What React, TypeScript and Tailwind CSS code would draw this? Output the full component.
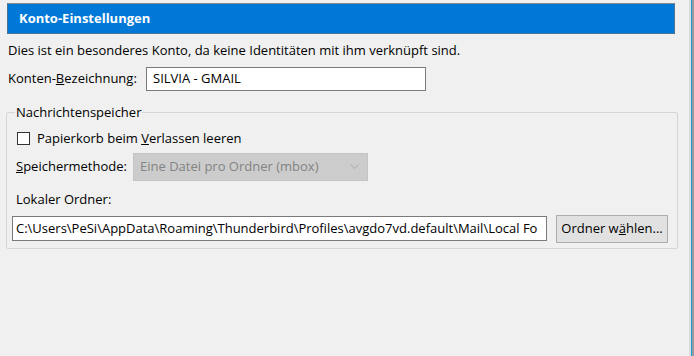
import React from "react";

const App = () => {
  return (
    <div
      className="flex w-[694px] h-[356px] bg-[#f0f0f0] text-[13px] text-black overflow-hidden"
      style={{ fontFamily: '"Open Sans", "Noto Sans", sans-serif' }}
    >
      <div className="flex flex-col w-[689px] pt-[3px] pl-[7px]">
        <div className="w-[668px] h-[31px] bg-[#0078d7] border border-[#4f7396] border-t-[#8a8a8a] flex items-center pl-[11px]">
          <span className="text-white font-bold text-[13px]">Konto-Einstellungen</span>
        </div>
        <div className="pl-[1px] mt-[8px] leading-[16px]">
          Dies ist ein besonderes Konto, da keine Identitäten mit ihm verknüpft sind.
        </div>
        <div className="flex items-center mt-[9px] pl-[1px]">
          <span className="w-[138px]">
            Konten-<u>B</u>ezeichnung:
          </span>
          <div className="w-[280px] h-[24px] bg-white border border-[#7a7a7a] flex items-center pl-[6px]">
            SILVIA - GMAIL
          </div>
        </div>
        <fieldset className="mt-[14px] -ml-[1px] w-[672px] border border-[#d5d5d5] rounded-[2px] px-[9px] pb-[5px]">
          <legend className="px-[1px] -ml-[1px] leading-[14px]">Nachrichtenspeicher</legend>
          <label className="flex items-center mt-[10px] pl-[1px]">
            <span className="w-[13px] h-[13px] border border-[#333] bg-white mr-[7px]" />
            <span>
              Papierkorb beim <u>V</u>erlassen leeren
            </span>
          </label>
          <div className="flex items-center mt-[4px]">
            <span className="w-[117px]">
              <u>S</u>peichermethode:
            </span>
            <div className="w-[235px] h-[28px] bg-[#cccccc] border border-[#c4c4c4] flex items-center justify-between pl-[6px] pr-[8px] text-[#838383]">
              <span>Eine Datei pro Ordner (mbox)</span>
              <svg width="9" height="6" viewBox="0 0 9 6" fill="none">
                <path d="M0.5 0.5 L4.5 4.5 L8.5 0.5" stroke="#a8a8a8" strokeWidth="1" />
              </svg>
            </div>
          </div>
          <div className="mt-[10px] leading-[16px]">Lokaler Ordner:</div>
          <div className="flex items-center mt-[8px] -ml-[4px]">
            <div className="w-[535px] h-[25px] bg-white border border-[#7a7a7a] flex items-center pl-[3px] overflow-hidden whitespace-nowrap">
              C:\Users\PeSi\AppData\Roaming\Thunderbird\Profiles\avgdo7vd.default\Mail\Local Fo
            </div>
            <button className="ml-[9px] w-[112px] h-[28px] bg-[#e1e1e1] border border-[#adadad] flex items-center justify-center">
              Ordner w<u>ä</u>hlen...
            </button>
          </div>
        </fieldset>
      </div>
      <div className="w-[5px] h-full flex">
        <div className="w-[2px] bg-[#dcdcdc]" />
        <div className="w-[1px] bg-[#1a9ad6]" />
        <div className="w-[2px] bg-[#9a9a9a]" />
      </div>
    </div>
  );
};

export default App;
